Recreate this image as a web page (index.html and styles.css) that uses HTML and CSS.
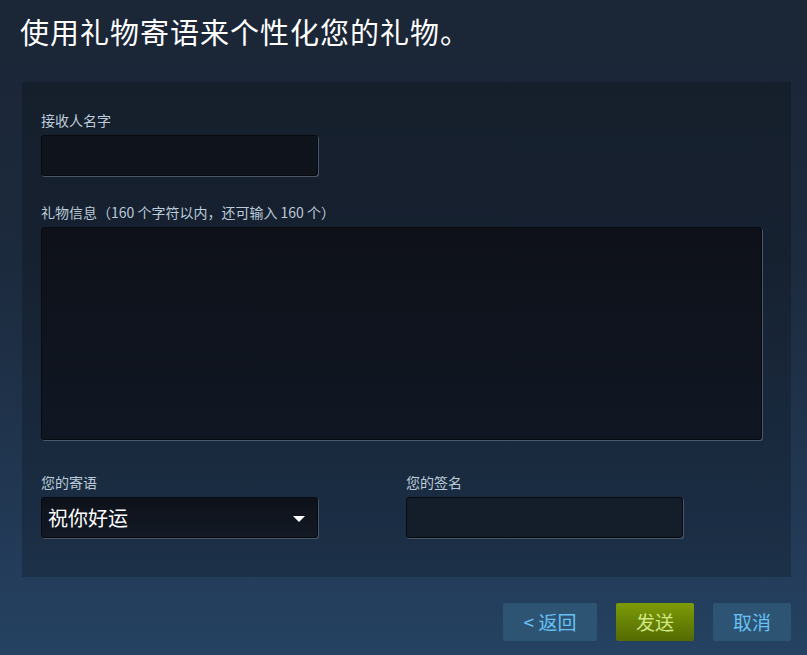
FILE: index.html
```html
<!DOCTYPE html>
<html lang="zh-CN">
<head>
<meta charset="utf-8">
<title>礼物寄语</title>
<link rel="stylesheet" href="styles.css">
</head>
<body>
<div class="page">
  <h1 class="title">使用礼物寄语来个性化您的礼物。</h1>
  <div class="panel">
    <div class="field">
      <label class="label">接收人名字</label>
      <div class="input input-short"></div>
    </div>
    <div class="field">
      <label class="label">礼物信息（160 个字符以内，还可输入 160 个）</label>
      <div class="input textarea"></div>
    </div>
    <div class="row">
      <div class="field">
        <label class="label">您的寄语</label>
        <div class="input input-short select">
          <span class="select-text">祝你好运</span>
          <span class="arrow"></span>
        </div>
      </div>
      <div class="field">
        <label class="label">您的签名</label>
        <div class="input input-short sign"></div>
      </div>
    </div>
  </div>
  <div class="actions">
    <button class="btn btn-blue btn-back">&lt; 返回</button>
    <button class="btn btn-green">发送</button>
    <button class="btn btn-blue btn-cancel">取消</button>
  </div>
</div>
</body>
</html>
```
FILE: styles.css
```css
html, body {
  margin: 0;
  padding: 0;
  height: 100%;
}
body {
  background: linear-gradient(to bottom, #1b2636 0%, #1c2a3d 40%, #213752 75%, #254262 100%);
  font-family: "Noto Sans CJK SC", "Liberation Sans", Arial, sans-serif;
  color: #fff;
  overflow: hidden;
}
.page {
  width: 807px;
  height: 655px;
  box-sizing: border-box;
  padding: 0 16px 0 22px;
}
.title {
  margin: 0 0 0 -2px;
  padding: 11px 0 0 0;
  height: 82px;
  box-sizing: border-box;
  font-size: 29px;
  font-weight: normal;
  line-height: 40px;
  color: #ffffff;
  letter-spacing: 1px;
}
.panel {
  width: 769px;
  height: 495px;
  box-sizing: border-box;
  background: rgba(0, 0, 0, 0.2);
  padding: 26px 29px 0 19px;
}
.field {
  display: flex;
  flex-direction: column;
}
.label {
  font-size: 14px;
  line-height: 18px;
  color: #bccbd9;
  height: 18px;
  padding-top: 3px;
  margin-bottom: 6px;
}
.field + .field {
  margin-top: 24px;
}
.input {
  box-sizing: border-box;
  background: #0f131b;
  border-radius: 3px;
  border: 1px solid #070a0f;
  box-shadow: 1px 1px 0 0 #4a5766;
}
.input-short {
  width: 277px;
  height: 41px;
}
.textarea {
  width: 721px;
  height: 213px;
  background: linear-gradient(to bottom, #0e1119 0%, #101723 100%);
}
.row {
  display: grid;
  grid-template-columns: 365px 277px;
  margin-top: 30px;
}
.row .field + .field {
  margin-top: 0;
}
.select {
  display: flex;
  align-items: center;
  justify-content: space-between;
  padding: 0 12px 0 6px;
  background: linear-gradient(to bottom, #0d1119 0%, #131a25 100%);
}
.select-text {
  font-size: 20px;
  line-height: 24px;
  color: #ffffff;
}
.arrow {
  width: 0;
  height: 0;
  border-left: 6px solid transparent;
  border-right: 6px solid transparent;
  border-top: 6px solid #ffffff;
  margin-top: 2px;
}
.sign {
  background: #141e2b;
}
.actions {
  display: flex;
  justify-content: flex-end;
  gap: 19px;
  width: 769px;
  margin-top: 26px;
}
.btn {
  height: 38px;
  border: none;
  border-radius: 2px;
  font-family: "Noto Sans CJK SC", "Liberation Sans", Arial, sans-serif;
  font-size: 19px;
  line-height: 38px;
  padding: 0;
  cursor: pointer;
}
.btn-blue {
  background: #2e5473;
  color: #67c1f5;
}
.btn-back {
  width: 94px;
}
.btn-cancel {
  width: 78px;
}
.btn-green {
  width: 78px;
  background: linear-gradient(to bottom, #7a9906 5%, #566c03 95%);
  color: #d2e885;
}
```
